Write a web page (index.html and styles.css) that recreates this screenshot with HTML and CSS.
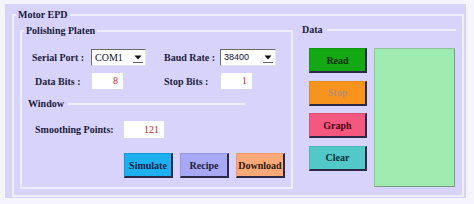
FILE: index.html
```html
<!DOCTYPE html>
<html lang="en">
<head>
    <meta charset="UTF-8">
    <title>Motor EPD</title>
    <link rel="stylesheet" href="styles.css">
</head>
<body>
    <div class="panel">
        <fieldset class="group group-main">
            <legend>Motor EPD</legend>
            <div class="main-row">
                <!-- Left: port settings and smoothing -->
                <fieldset class="group group-platen">
                    <legend>Polishing Platen</legend>
                    <div class="port-grid">
                        <span class="label">Serial Port :</span>
                        <div class="combo">
                            <span class="combo-value">COM1</span>
                            <span class="combo-arrow">
                                <svg width="12" height="12" viewBox="0 0 12 12"><polygon points="2.5,3.5 9.5,3.5 6,7.5" fill="#111"/><line x1="1" y1="10.5" x2="11" y2="10.5" stroke="#666" stroke-width="1"/></svg>
                            </span>
                        </div>
                        <span></span>
                        <span class="label">Baud Rate :</span>
                        <div class="combo">
                            <span class="combo-value sans">38400</span>
                            <span class="combo-arrow">
                                <svg width="12" height="12" viewBox="0 0 12 12"><polygon points="2.5,3.5 9.5,3.5 6,7.5" fill="#111"/><line x1="1" y1="10.5" x2="11" y2="10.5" stroke="#666" stroke-width="1"/></svg>
                            </span>
                        </div>

                        <span class="label indent">Data Bits :</span>
                        <div class="field field-small">8</div>
                        <span></span>
                        <span class="label">Stop Bits :</span>
                        <div class="field field-small">1</div>
                    </div>

                    <fieldset class="group group-line group-window">
                        <legend>Window</legend>
                        <div class="smooth-row">
                            <span class="label smooth-label">Smoothing Points:</span>
                            <div class="field field-wide">121</div>
                        </div>
                    </fieldset>

                    <div class="actions">
                        <button class="btn btn-simulate">Simulate</button>
                        <button class="btn btn-recipe">Recipe</button>
                        <button class="btn btn-download">Download</button>
                    </div>
                </fieldset>

                <!-- Right: data controls -->
                <fieldset class="group group-line group-data">
                    <legend>Data</legend>
                    <div class="data-row">
                        <div class="data-buttons">
                            <button class="btn btn-read">Read</button>
                            <button class="btn btn-stop">Stop</button>
                            <button class="btn btn-graph">Graph</button>
                            <button class="btn btn-clear">Clear</button>
                        </div>
                        <div class="data-view"></div>
                    </div>
                </fieldset>
            </div>
        </fieldset>
    </div>
</body>
</html>
```

FILE: styles.css
```css
:root {
    --panel: #d7d3fa;
    --edge: #eeecff;
    --ink: #1c1c3c;
    --value: #c42a2a;
    --shade: #2a2a48;
    --serif: "Liberation Serif", "DejaVu Serif", serif;
}

* {
    box-sizing: border-box;
}

body {
    margin: 0;
    background-color: #f6f5ff;
    font-family: var(--serif);
    color: var(--ink);
}

.panel {
    width: 461px;
    height: 194px;
    margin: 4px 0 0 5px;
    padding: 5px 0 0 7px;
    background-color: var(--panel);
}

.group {
    margin: 0;
    min-width: 0;
    border: 2px solid var(--edge);
}

.group legend {
    padding: 0 2px;
    font-family: var(--serif);
    font-size: 10px;
    font-weight: bold;
    line-height: 12px;
}

.group-main {
    width: 452px;
    height: 188px;
    padding: 4px 0 0 6px;
}

.group-main > legend {
    margin-left: -4px;
}

.main-row {
    display: flex;
    gap: 9px;
}

/* Polishing Platen */
.group-platen {
    width: 273px;
    height: 164px;
    padding: 0 0 0 2px;
}

.group-line {
    border: none;
    border-top: 2px solid var(--edge);
    padding: 0;
}

.group-line legend {
    padding: 0 4px 0 0;
}

.port-grid {
    display: grid;
    grid-template-columns: 59px 55px 18px 56px 56px;
    grid-template-rows: 17px 16px;
    row-gap: 7px;
    align-items: center;
    margin: 12px 0 0 8px;
}

.label {
    font-family: var(--serif);
    font-size: 10px;
    font-weight: bold;
    white-space: nowrap;
}

.indent {
    padding-left: 3px;
}

.combo {
    display: flex;
    align-items: center;
    height: 17px;
    background-color: #fff;
    border: 1px solid;
    border-color: #6a6a6a #e4e4e4 #e4e4e4 #6a6a6a;
}

.combo-value {
    flex: 1;
    padding-left: 3px;
    font-family: var(--serif);
    font-size: 10px;
    line-height: 15px;
    color: #101030;
}

.combo-value.sans {
    font-family: "Liberation Sans", Arial, sans-serif;
    font-size: 9px;
}

.combo-arrow {
    display: flex;
    width: 14px;
    height: 15px;
    align-items: center;
    justify-content: center;
}

.field {
    height: 16px;
    padding-right: 5px;
    background-color: #fff;
    color: var(--value);
    font-family: var(--serif);
    font-size: 10px;
    line-height: 16px;
    text-align: right;
}

.field-small {
    width: 31px;
    margin-left: 1px;
}

.group-window {
    width: 217px;
    margin: 9px 0 0 4px;
}

.smooth-row {
    display: flex;
    align-items: center;
    margin: 11px 0 0 7px;
}

.smooth-label {
    width: 89px;
}

.field-wide {
    width: 40px;
    height: 17px;
    line-height: 17px;
}

.actions {
    display: flex;
    gap: 7px;
    margin: 15px 0 0 100px;
}

/* Buttons */
.btn {
    width: 49px;
    height: 25px;
    padding: 0;
    font-family: var(--serif);
    font-size: 10px;
    font-weight: bold;
    border-style: solid;
    border-width: 1px 2px 2px 1px;
    cursor: pointer;
}

.btn-simulate {
    background-color: #1cb0f0;
    border-color: #1896d0 var(--shade) var(--shade) #1896d0;
    color: #10204a;
}

.btn-recipe {
    background-color: #a8a8f6;
    border-color: #9898e0 var(--shade) var(--shade) #9898e0;
    color: #20203c;
}

.btn-download {
    background-color: #ffa878;
    border-color: #f09868 var(--shade) var(--shade) #f09868;
    color: #2c1810;
}

/* Data */
.group-data {
    width: 154px;
    margin-top: -1px;
}

.data-row {
    display: flex;
    gap: 7px;
    margin: 12px 0 0 7px;
}

.data-buttons {
    display: flex;
    flex-direction: column;
    gap: 7.5px;
}

.data-buttons .btn {
    width: 58px;
}

.btn-read {
    background-color: #14a814;
    border-color: #109810 var(--shade) var(--shade) #109810;
    color: #002c00;
}

.btn-stop {
    background-color: #f7941d;
    border-color: #e88a18 var(--shade) var(--shade) #e88a18;
    color: #b89070;
}

.btn-graph {
    background-color: #f4587e;
    border-color: #e44c72 var(--shade) var(--shade) #e44c72;
    color: #4c0018;
}

.btn-clear {
    background-color: #52c8c8;
    border-color: #46b8b8 var(--shade) var(--shade) #46b8b8;
    color: #00303c;
}

.data-view {
    width: 81px;
    height: 139px;
    background-color: #a0ecb0;
    border: 1px solid;
    border-color: #8cc89a #789c84 #789c84 #8cc89a;
}
```
